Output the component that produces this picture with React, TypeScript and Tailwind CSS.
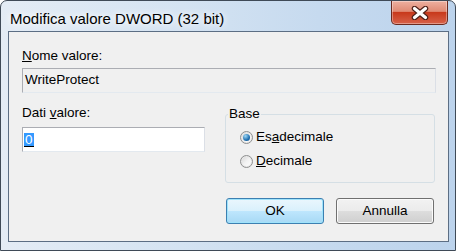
import React from "react";

const font = { fontFamily: '"Liberation Sans", Arial, sans-serif' };

function Radio({ checked }: { checked?: boolean }) {
  return (
    <span className="relative flex h-[13px] w-[13px] shrink-0 items-center justify-center rounded-full border border-[#8e8f8f] bg-gradient-to-br from-[#d3d3d3] via-[#f2f2f2] to-[#ffffff] shadow-[inset_0_0_0_1px_#e8e8e8]">
      {checked && (
        <span className="h-[7px] w-[7px] rounded-full bg-[radial-gradient(circle_at_35%_30%,#9fd8f5,#1f6fb0_60%,#0d4a80)]" />
      )}
    </span>
  );
}

function CloseButton() {
  return (
    <div className="flex h-[24px] w-[57px] items-center justify-center rounded-b-[5px] border border-t-0 border-[#6b2a1f] bg-[linear-gradient(to_bottom,#eeb0a0_0%,#e08a74_45%,#c8391c_50%,#d7624a_100%)] shadow-[inset_0_0_0_1px_rgba(255,255,255,0.35)]">
      <svg width="18" height="14" viewBox="0 0 18 14">
        <path d="M3.5 2.5 L14.5 11.5 M14.5 2.5 L3.5 11.5" stroke="#4e2018" strokeWidth="5.5" strokeLinecap="round" />
        <path d="M3.5 2.5 L14.5 11.5 M14.5 2.5 L3.5 11.5" stroke="#ffffff" strokeWidth="3.2" strokeLinecap="round" />
      </svg>
    </div>
  );
}

function Button({ children, isDefault }: { children: React.ReactNode; isDefault?: boolean }) {
  return (
    <button
      className={
        "h-[26px] w-[98px] rounded-[3px] border text-[13.5px] text-black " +
        (isDefault
          ? "border-[#3c7fb1] bg-[linear-gradient(to_bottom,#eaf6fd_0%,#d9f0fc_50%,#bee6fd_51%,#a7d9f5_100%)] shadow-[inset_0_0_0_1px_#9fe3fb]"
          : "border-[#707070] bg-[linear-gradient(to_bottom,#f2f2f2_0%,#ebebeb_50%,#dddddd_51%,#cfcfcf_100%)] shadow-[inset_0_0_0_1px_#fbfbfb]")
      }
      style={font}
    >
      {children}
    </button>
  );
}

export default function App() {
  return (
    <div
      className="flex h-[251px] w-[456px] flex-col overflow-hidden rounded-t-[7px] border border-[#3f4a57] bg-[linear-gradient(to_right,#e4ecf5_0%,#d4e3f2_40%,#c6daef_70%,#bcd3ec_100%)]"
      style={font}
    >
      <div className="flex h-[30px] shrink-0 items-start justify-between">
        <div className="pl-[9px] pt-[7px] text-[15px] text-black [text-shadow:0_0_6px_#ffffff,0_0_10px_#ffffff]">
          Modifica valore DWORD (32 bit)
        </div>
        <div className="mr-[7px]">
          <CloseButton />
        </div>
      </div>

      <div className="mb-[8px] ml-[7px] mr-[6px] flex flex-1 flex-col border border-[#5c6e84] bg-[#f0f0f0] pl-[13px] pr-[12px] text-[13.5px] text-black">
        <div className="mt-[16px] h-[16px] leading-[16px]">
          <u>N</u>ome valore:
        </div>
        <div className="mt-[4px] flex h-[25px] items-center border border-[#abadb3] border-b-[#e3e9ef] border-r-[#dbdfe6] bg-[#f0f0f0] pl-[2px]">
          WriteProtect
        </div>

        <div className="mt-[12px] flex">
          <div className="flex w-[183px] flex-col">
            <div className="h-[16px] leading-[16px]">
              Dati <u>v</u>alore:
            </div>
            <div className="mt-[6px] flex h-[25px] items-center border border-[#abadb3] border-b-[#e3e9ef] border-r-[#dbdfe6] bg-white pl-[1px]">
              <span className="border-b border-[#000] bg-[#3399ff] px-[1px] leading-[13px] text-white">0</span>
            </div>
          </div>

          <div className="relative ml-[20px] mt-[9px] h-[69px] w-[210px] rounded-[3px] border border-[#d5dfe5]">
            <div className="absolute -top-[9px] left-[2px] bg-[#f0f0f0] px-[1px] leading-[16px]">Base</div>
            <div className="flex flex-col gap-[11px] pl-[14px] pt-[16px]">
              <div className="flex h-[13px] items-center gap-[3px]">
                <Radio checked />
                <span>
                  Es<u>a</u>decimale
                </span>
              </div>
              <div className="flex h-[13px] items-center gap-[3px]">
                <Radio />
                <span>
                  <u>D</u>ecimale
                </span>
              </div>
            </div>
          </div>
        </div>

        <div className="mr-[2px] mt-[15px] flex justify-end gap-[12px]">
          <Button isDefault>OK</Button>
          <Button>Annulla</Button>
        </div>
      </div>
    </div>
  );
}
